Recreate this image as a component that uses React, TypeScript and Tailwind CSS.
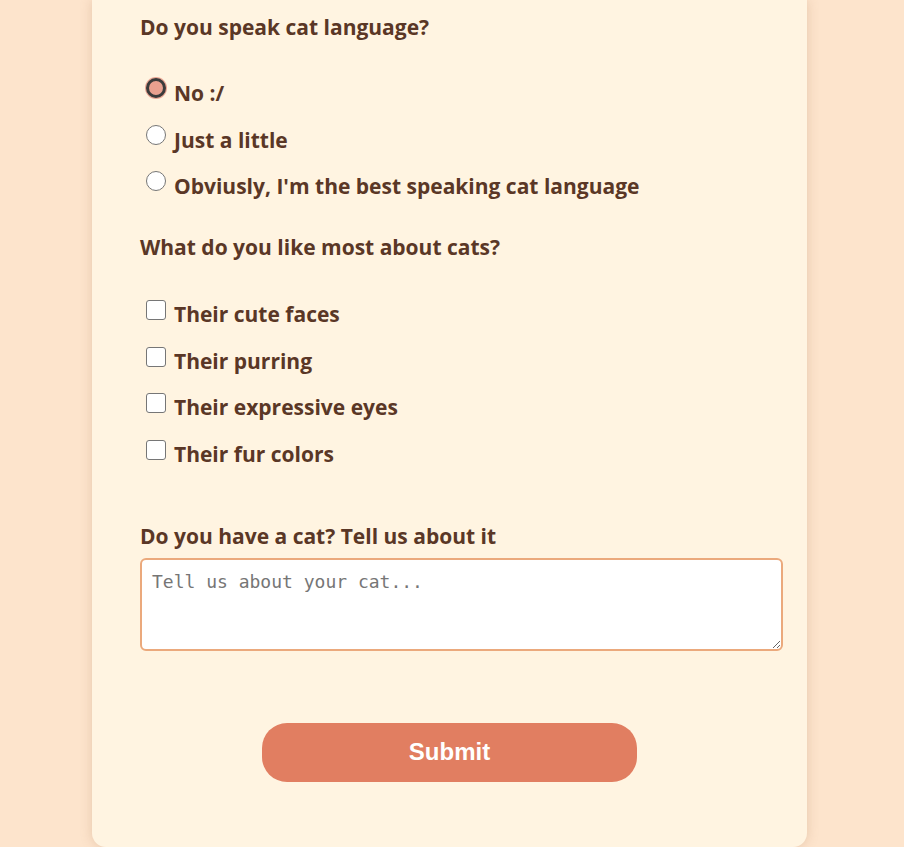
import React from "react";

const radios = ["No :/", "Just a little", "Obviusly, I'm the best speaking cat language"];
const likes = ["Their cute faces", "Their purring", "Their expressive eyes", "Their fur colors"];

function App() {
  return (
    <div className="min-h-[847px] w-full bg-[#fde4cc] font-['Open_Sans',sans-serif] text-[#5a3726]">
      <div className="ml-[92px] w-[715px] rounded-b-[14px] bg-[#fff4e1] pl-[48px] pr-[24px] pb-[65px] pt-[12px] shadow-[0_0_12px_rgba(160,110,70,0.25)]">
        <p className="text-[21px] font-bold leading-[30px]">Do you speak cat language?</p>

        <div className="mt-[36px] flex flex-col gap-[16.5px]">
          {radios.map((r, i) => (
            <label key={r} className="flex items-start gap-2 pl-[6px] text-[21px] font-bold leading-[30px]">
              <input
                type="radio"
                name="speak"
                defaultChecked={i === 0}
                className="h-5 w-5 shrink-0 appearance-none rounded-full border border-[#767676] bg-white checked:border-[3px] checked:border-[#3b3b3b] checked:bg-[#e9a08f] checked:ring-1 checked:ring-[#eaa593]"
              />
              <span>{r}</span>
            </label>
          ))}
        </div>

        <p className="mt-[31px] text-[21px] font-bold leading-[30px]">What do you like most about cats?</p>

        <div className="mt-[37px] flex flex-col gap-[16.5px]">
          {likes.map((l) => (
            <label key={l} className="flex items-start gap-2 pl-[6px] text-[21px] font-bold leading-[30px]">
              <input
                type="checkbox"
                className="mt-[1px] h-5 w-5 shrink-0 appearance-none rounded-[3px] border border-[#767676] bg-white"
              />
              <span>{l}</span>
            </label>
          ))}
        </div>

        <p className="mt-[52px] text-[21px] font-bold leading-[30px]">Do you have a cat? Tell us about it</p>
        <textarea
          placeholder="Tell us about your cat..."
          className="mt-[7px] block h-[93px] w-full rounded-[6px] border-2 border-[#eba97c] bg-white px-[10px] pt-[10px] pb-[6px] font-['DejaVu_Sans_Mono',monospace] text-[18px] leading-[24px] placeholder:text-[#767676] outline-none"
        />

        <div className="mt-[72px] flex justify-center pr-[24px]">
          <button className="h-[59px] w-[375px] rounded-[25px] bg-[#e17e61] font-['Liberation_Sans',Arial,sans-serif] text-[24px] font-bold text-white">
            Submit
          </button>
        </div>
      </div>
    </div>
  );
}

export default App;
